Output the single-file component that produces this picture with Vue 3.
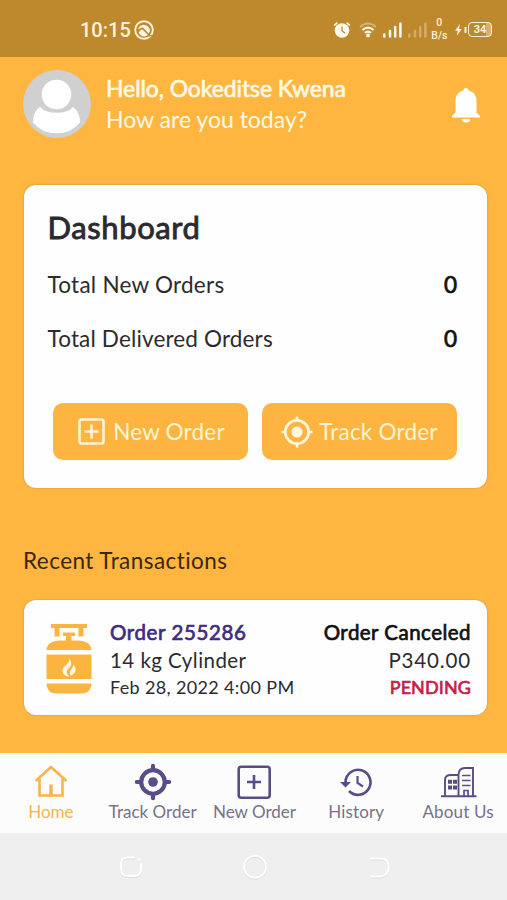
<script setup>
const totals = [
  { label: 'Total New Orders', value: 0, cls: 'new' },
  { label: 'Total Delivered Orders', value: 0, cls: 'delivered' },
]
const tabs = [
  { id: 'home', label: 'Home' },
  { id: 'track', label: 'Track Order' },
  { id: 'new', label: 'New Order' },
  { id: 'history', label: 'History' },
  { id: 'about', label: 'About Us' },
]
</script>

<template>
  <div class="screen">
    <div class="status">
      <span class="clock">10:15</span>
      <svg class="edge" viewBox="0 0 20 20" width="20" height="20">
        <circle cx="10" cy="10" r="8.8" fill="none" stroke="#fff3dc" stroke-width="1.9" />
        <path d="M4 9.500A6.100 6.100 0 0 1 16 11.500L14.500 13.500 9 7.500Z" fill="#fff3dc" />
        <path d="M4.500 12.500L8 9 14 15A6 6 0 0 1 4.500 12.500Z" fill="#fff3dc" />
        <path d="M4 10.800L7.800 7.800 15.500 15.500" fill="none" stroke="#be882d" stroke-width="1" />
        <path d="M14.500 16.500L18.500 15" stroke="#be882d" stroke-width="1.300" />
      </svg>
      <svg class="alarm" viewBox="0 0 18 18" width="18" height="18">
        <circle cx="9" cy="9.5" r="7.3" fill="#fff9ec" />
        <path d="M1.2 4.4L4.4 1.6M16.8 4.4L13.6 1.6" stroke="#fff9ec" stroke-width="1.7" />
        <path d="M9 5.5V9.8L12 12.2" fill="none" stroke="#be882d" stroke-width="1.3" />
      </svg>
      <svg class="wifi" viewBox="0 0 18 16" width="18" height="16">
        <path d="M1 5Q9-2 17 5" fill="none" stroke="#d8b173" stroke-width="1.7" />
        <path d="M3.4 8Q9 3.2 14.6 8M5.9 10.9Q9 8.3 12.1 10.9" fill="none" stroke="#fff9ec" stroke-width="2.1" />
        <circle cx="9" cy="13.5" r="1.9" fill="#fff9ec" />
      </svg>
      <svg class="bars" viewBox="0 0 19 16" width="19" height="16">
        <path d="M1.3 12.5V14.500M7 9V14.500M12.2 5V14.500M17.4 1.500V14.500" stroke="#fff9ec" stroke-width="2.500" stroke-linecap="round" />
      </svg>
      <svg class="bars faint" viewBox="0 0 19 16" width="19" height="16">
        <path d="M1.3 12.5V14.500M7 9V14.500M12.2 5V14.500M17.4 1.500V14.500" stroke="#fff9ec" stroke-width="2.500" stroke-linecap="round" />
      </svg>
      <span class="rate"><span>0</span><span>B/s</span></span>
      <svg class="bolt" viewBox="0 0 12 12" width="12" height="12">
        <path d="M5 0L0 6.7H2.8L1.6 12 6.8 5.1H4Z" fill="#fff3dc" />
        <path d="M10.5 3V9" stroke="#fff3dc" stroke-width="2" />
      </svg>
      <span class="battery">34</span>
    </div>

    <header class="header">
      <svg class="avatar" viewBox="0 0 68 68" width="68" height="68">
        <circle cx="34" cy="34" r="34" fill="#d0d0d1" />
        <circle cx="33.5" cy="24.5" r="14.8" fill="#fff" />
        <path d="M17 37Q22 42.8 33.8 42.8T50 37Q57 42 57 52.5Q48.500 63.300 33.500 63.300T10 52.500Q10 41 17 37Z" fill="#fff" />
      </svg>
      <div class="greeting">
        <div class="hello">Hello, Ookeditse Kwena</div>
        <div class="how">How are you today?</div>
      </div>
      <svg class="bell" viewBox="0 0 28 35" width="28" height="35">
        <path d="M14 0C15.500 0 16.500 1 16.700 2.600C21.800 4 24.500 8 24.500 13V24.500L28 28V29.500H0V28L3.500 24.500V13C3.500 8 6.200 4 11.300 2.600C11.500 1 12.500 0 14 0ZM9.800 31H18.200A4.200 3.500 0 0 1 9.800 31Z" fill="#fff" />
      </svg>
    </header>

    <section class="dashboard">
      <h1>Dashboard</h1>
      <div v-for="t in totals" :key="t.label" class="total">
        <span :class="t.cls">{{ t.label }}</span>
        <b>{{ t.value }}</b>
      </div>
      <div class="actions">
        <button class="action">
          <svg viewBox="0 0 27 27" width="27" height="27" fill="none" stroke="#fff4d4" stroke-width="2.600">
            <rect x="1.500" y="1.500" width="24" height="24" rx="2" />
            <path d="M13.500 6.500V20.500M6.500 13.500H20.500" />
          </svg>
          <span class="new-label">New Order</span>
        </button>
        <button class="action track">
          <svg viewBox="0 0 32 32" width="32" height="32" fill="none" stroke="#fff6de" stroke-width="2.700">
            <circle cx="16" cy="16" r="11.700" />
            <circle cx="16" cy="16" r="5.600" fill="#fff6de" stroke="none" />
            <path d="M16 .5V5M16 27V31.500M.5 16H5M27 16H31.500" />
          </svg>
          <span class="track-label">Track Order</span>
        </button>
      </div>
    </section>

    <h2>Recent Transactions</h2>

    <section class="order">
      <svg class="cylinder" viewBox="0 0 46 70" width="46" height="70" fill="#fcb441">
        <path d="M5 0H41V4H37.500V12.500H32.500V4H13.500V12.500H8.500V4H5Z" />
        <path d="M17 8.500H29V12H25.500V17H20V12H17Z" />
        <path d="M14 16.500H32C40 16.500 45 20 45.500 26H.5C1 20 6 16.500 14 16.500Z" />
        <path d="M.5 30.500H45.500V55H.5ZM.5 59.500H45.500C45 66.500 41 69.500 36 69.500H10C5 69.500 1 66.500 .5 59.500Z" />
        <path d="M23 34.500C25 40 16.500 41 16.500 46.500C16.500 50 19.500 52.500 23.500 52.500C19.500 49 20 46 24 43C26 40.500 25.500 37 23 34.500ZM27 40.500C28 45 22 46 24.500 51.500C30 50 31.500 44 27 40.500Z" fill="#fff8ea" />
      </svg>
      <div class="details">
        <div class="id">Order 255286</div>
        <div class="item">14 kg Cylinder</div>
        <div class="date">Feb 28, 2022 4:00 PM</div>
      </div>
      <div class="outcome">
        <div class="state">Order Canceled</div>
        <div class="price">P340.00</div>
        <div class="pending">PENDING</div>
      </div>
    </section>

    <nav class="tabs">
      <div v-for="t in tabs" :key="t.id" class="tab" :class="'tab-' + t.id">
        <svg viewBox="0 0 38 38" width="38" height="38" fill="none" stroke="currentColor">
          <g v-if="t.id === 'home'" stroke-width="2.600">
            <path d="M3.500 18L19 4 34.500 18M7.500 15V32.500H30.500V15" />
            <path d="M19 21.500V32" stroke-width="3.500" />
          </g>
          <g v-else-if="t.id === 'track'" stroke-width="4.200" stroke-linecap="round">
            <circle cx="19" cy="19" r="11.800" />
            <circle cx="19" cy="19" r="4.800" fill="currentColor" stroke="none" />
            <path d="M19 2.800V7M19 31V35.200M2.800 19H7M31 19H35.200" />
          </g>
          <g v-else-if="t.id === 'new'" stroke-width="2.600">
            <rect x="3.700" y="3.700" width="31" height="31" rx="2.500" />
            <path d="M19 12V26M12 19H26" />
          </g>
          <g v-else-if="t.id === 'history'" stroke-width="2.700">
            <path d="M8.500 19A12.500 12.500 0 1 1 12 28" />
            <path d="M3 19H14L8.500 24.500Z" fill="currentColor" stroke="none" />
            <path d="M20.500 13V20L26 23.500" stroke-width="2.200" />
          </g>
          <g v-else stroke-width="1.700">
            <path d="M2 33.300H37.500M6 33V17Q6 12 12 12H19M19.500 33V12Q19.500 5 26 5H34V33" stroke-width="1.900" />
            <path d="M23 12.500H31.500M23 17.500H31.500M23 22.500H31.500M25 33V27.500H29V33" />
            <path d="M9 18.700H18M9 24.500H18" stroke-width="4" stroke-dasharray="4 1" />
          </g>
        </svg>
        <span>{{ t.label }}</span>
      </div>
    </nav>

    <div class="system">
      <svg viewBox="0 0 26 26" width="26" height="26" fill="none" stroke-width="2">
        <path d="M17 4.500H10Q3 4.500 3 11V16Q3 23 10 23H16Q23 23 23 16V10" stroke="#dcdcdc" />
        <path d="M17 3.500H10Q3 3.500 3 10V15Q3 22 10 22H16Q23 22 23 15V9M20 6L22.500 4.500" stroke="#fff" />
      </svg>
      <svg viewBox="0 0 26 26" width="26" height="26" fill="none" stroke-width="2">
        <circle cx="13" cy="13.800" r="11" stroke="#dcdcdc" />
        <circle cx="13" cy="12.800" r="11" stroke="#fff" />
      </svg>
      <svg viewBox="0 0 26 26" width="26" height="26" fill="none" stroke-width="2">
        <path d="M4 5.500H15Q22.500 5.500 22.500 14T15 23.500H4" stroke="#dcdcdc" />
        <path d="M4 4.500H15Q22.500 4.500 22.500 13T15 22.500H4" stroke="#fff" />
      </svg>
    </div>
  </div>
</template>

<style>
body {
  margin: 0;
  background: #feb640;
}
</style>

<style scoped>
.screen {
  width: 507px;
  height: 900px;
  overflow: hidden;
  display: flex;
  flex-direction: column;
  background: #feb640;
  font-family: Lato, "Open Sans", sans-serif;
  font-variant-ligatures: none;
  color: #2b2b2f;
  white-space: nowrap;
}
svg {
  flex: none;
  display: block;
}
.status {
  height: 57px;
  flex: none;
  box-sizing: border-box;
  padding: 2px 15px 0 80px;
  display: flex;
  align-items: center;
  background: #be882d;
  color: #fff3dc;
  font-family: Roboto, sans-serif;
}
.clock {
  width: 55px;
  font-size: 20px;
  font-weight: 500;
}
.edge {
  margin-right: 179px;
}
.wifi {
  margin-left: 8px;
}
.bars {
  margin-left: 6px;
}
.faint {
  opacity: 0.32;
}
.rate {
  display: flex;
  flex-direction: column;
  align-items: center;
  width: 18px;
  margin-left: 3px;
  font-size: 10.5px;
  line-height: 12.5px;
  font-weight: 500;
}
.bolt {
  margin-left: 7px;
}
.battery {
  box-sizing: border-box;
  width: 24px;
  height: 15px;
  margin-left: 1px;
  border: 1.5px solid #fff3dc;
  border-radius: 4px;
  background: linear-gradient(90deg, transparent 75%, #d8b173 75%);
  font-size: 11px;
  line-height: 13px;
  font-weight: 700;
  text-align: center;
}
.header {
  height: 128px;
  flex: none;
  box-sizing: border-box;
  padding: 13px 27px 0 23px;
  display: flex;
  align-items: flex-start;
  color: #fff8e4;
}
.greeting {
  flex: 1;
  padding: 3px 0 0 15px;
}
.hello,
.how {
  font-size: 23px;
  line-height: 31px;
}
.hello,
h1,
.total b,
.id,
.state,
.pending {
  font-weight: 400;
  -webkit-text-stroke: 0.7px currentColor;
}
.hello {
  letter-spacing: -0.1px;
}
.bell {
  margin-top: 18px;
}
.dashboard {
  height: 303px;
  flex: none;
  box-sizing: border-box;
  margin: 0 20px 0 24px;
  padding: 22px 30px 28px 23.5px;
  display: flex;
  flex-direction: column;
  border-radius: 12px;
  background: #fefefe;
  box-shadow: 0 0 2px #b58a49;
}
h1 {
  margin: 0 0 18px;
  font-size: 31px;
  line-height: 40px;
  letter-spacing: 0.6px;
  -webkit-text-stroke-width: 0.9px;
}
.total {
  display: flex;
  justify-content: space-between;
  height: 54px;
  line-height: 40px;
  font-size: 22.5px;
}
.new {
  letter-spacing: 0.25px;
}
.delivered {
  letter-spacing: 0.15px;
}
.total b {
  color: #111;
  font-size: 22.5px;
}
.actions {
  display: flex;
  gap: 14px;
  margin: auto 0 0 5.5px;
}
.action {
  flex: 1;
  height: 57px;
  padding: 0;
  display: flex;
  align-items: center;
  justify-content: center;
  gap: 8px;
  border: 0;
  border-radius: 10px;
  background: #fdb440;
  color: #fff4d4;
  font-family: inherit;
  font-size: 22.5px;
  letter-spacing: 0.2px;
}
.new-label {
  margin-right: -2px;
}
.track {
  gap: 6px;
}
h2 {
  height: 112px;
  flex: none;
  box-sizing: border-box;
  margin: 0;
  padding: 58px 0 0 23px;
  font-size: 22.5px;
  line-height: 30px;
  font-weight: 400;
  letter-spacing: 0.45px;
  color: #3a2710;
}
.order {
  height: 115px;
  flex: none;
  box-sizing: border-box;
  margin: 0 20px 38px 24px;
  padding: 18px 16px 0 22px;
  display: flex;
  border-radius: 12px;
  background: #fefefe;
  box-shadow: 0 0 2px #b58a49;
}
.cylinder {
  margin-top: 6px;
}
.details {
  flex: 1;
  padding-left: 18px;
}
.outcome {
  text-align: right;
}
.details div,
.outcome div {
  font-size: 20.5px;
  line-height: 28px;
  letter-spacing: 0.45px;
}
.details .id {
  color: #3f2c80;
  letter-spacing: 0.6px;
}
.outcome .state {
  color: #111;
  letter-spacing: 0.47px;
}
.outcome .price {
  letter-spacing: 0.85px;
}
.details .date,
.outcome .pending {
  font-size: 18px;
  line-height: 26px;
  letter-spacing: 0.35px;
}
.outcome .pending {
  color: #c51f45;
  letter-spacing: 0.1px;
}
.tabs {
  height: 80px;
  flex: none;
  box-sizing: border-box;
  display: grid;
  grid-template-columns: repeat(5, 101.8px);
  background: #fcfcfc;
}
.tab {
  display: flex;
  flex-direction: column;
  align-items: center;
  padding-top: 10px;
  color: #5b4c88;
  font-size: 17px;
  line-height: 21px;
}
.tab span {
  color: #777287;
}
.tab-home,
.tab-home span {
  color: #f7b44c;
}
.tab-history,
.tab-about {
  letter-spacing: 0.15px;
}
.system {
  flex: 1;
  display: flex;
  justify-content: center;
  align-items: center;
  gap: 98px;
  padding-left: 3px;
  background: #efefef;
}
</style>
